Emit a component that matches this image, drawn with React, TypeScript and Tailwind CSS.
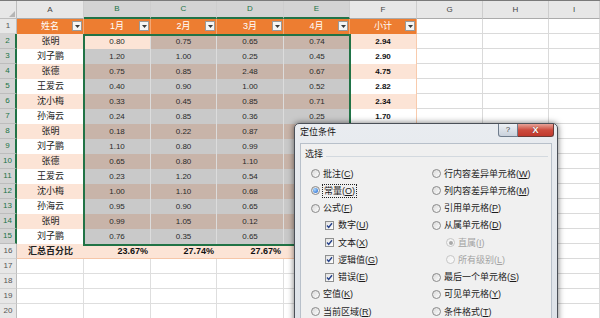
import React from 'react';

const FONT = "font-['Liberation_Sans','Noto_Sans_CJK_SC',sans-serif]";

// widths of columns A..I
const colW = ['w-[67px]', 'w-[67px]', 'w-[66px]', 'w-[67px]', 'w-[66px]', 'w-[67px]', 'w-[66px]', 'w-[66px]', 'flex-1'];
const letters = ['A', 'B', 'C', 'D', 'E', 'F', 'G', 'H', 'I'];

const names = ['张明', '刘子鹏', '张德', '王爱云', '沈小梅', '孙海云', '张明', '刘子鹏', '张德', '王爱云', '沈小梅', '孙海云', '张明', '刘子鹏'];
const values = [
  ['0.80', '0.75', '0.65', '0.74'],
  ['1.20', '1.00', '0.25', '0.45'],
  ['0.75', '0.85', '2.48', '0.67'],
  ['0.40', '0.90', '1.00', '0.52'],
  ['0.33', '0.45', '0.85', '0.71'],
  ['0.24', '0.85', '0.36', '0.25'],
  ['0.18', '0.22', '0.87', '0.56'],
  ['1.10', '0.80', '0.99', '0.43'],
  ['0.65', '0.80', '1.10', '0.92'],
  ['0.23', '1.20', '0.54', '0.38'],
  ['1.00', '1.10', '0.68', '0.77'],
  ['0.95', '0.90', '0.65', '0.48'],
  ['0.99', '1.05', '0.12', '0.66'],
  ['0.76', '0.35', '0.65', '0.80'],
];
const totals = values.map((r) => r.reduce((s, v) => s + parseFloat(v), 0).toFixed(2));
const months = ['1月', '2月', '3月', '4月'];
const percents = ['23.67%', '27.74%', '27.67%', '20.92%'];

// rows from 8 down are covered by the dialog in columns E and F
const hidden = (r: number) => r >= 8;

const GRID = 'bg-white border-r border-b border-[#dadada]';

const Cell = ({ w, cls, children }: { w: string; cls: string; children?: React.ReactNode }) => (
  <div className={`${w} shrink-0 h-full flex items-center ${cls}`}>{children}</div>
);

const Filter = () => (
  <span className="absolute right-[1px] top-[2px] w-[10px] h-[10px] bg-[#f4f4f4] border border-[#9a9a9a] flex items-center justify-center">
    <svg width="5" height="3" viewBox="0 0 5 3">
      <path d="M0 0h5L2.5 3z" fill="#3a3a3a" />
    </svg>
  </span>
);

const RowHead = ({ r }: { r: number }) => {
  const sel = r >= 2 && r <= 15;
  return (
    <div
      className={`w-[17px] shrink-0 h-full flex items-center justify-center text-[8px] border-b ${
        sel
          ? 'bg-[#d3d3d3] text-[#217346] border-r-2 border-r-[#217346] border-b-[#bdbdbd]'
          : 'bg-[#e7e7e7] text-[#555] border-r border-r-[#bdbdbd] border-b-[#d2d2d2]'
      }`}
    >
      {r}
    </div>
  );
};

const SheetRow = ({ r }: { r: number }) => {
  const cells: React.ReactNode[] = [];
  if (r === 1) {
    const heads = ['姓名', ...months, '小计'];
    heads.forEach((h, i) =>
      cells.push(
        <Cell key={i} w={colW[i]} cls="relative justify-center bg-[#ed7d31] text-white border-r border-[#f3a774]">
          {h}
          <Filter />
        </Cell>
      )
    );
  } else if (r <= 15) {
    const i = r - 2;
    const peach = r % 2 === 0;
    cells.push(
      <Cell key="a" w={colW[0]} cls={`justify-center text-[#222] ${peach ? 'bg-[#fce4d6]' : 'bg-white'}`}>
        {names[i]}
      </Cell>
    );
    values[i].forEach((v, j) => {
      const bg = r === 2 && j === 0 ? 'bg-[#fce4d6]' : peach ? 'bg-[#c8b4a9]' : 'bg-[#c9c9c9]';
      cells.push(
        <Cell key={j} w={colW[j + 1]} cls={`justify-center text-[8px] text-[#2a2a2a] ${bg} ${j < 3 ? 'border-r border-[#dcdcdc]' : ''}`}>
          {j === 3 && hidden(r) ? null : v}
        </Cell>
      );
    });
    cells.push(
      <Cell key="f" w={colW[5]} cls={`justify-center text-[8px] font-bold text-[#111] border-r border-[#f8cbad] ${peach ? 'bg-[#fce4d6]' : 'bg-white'}`}>
        {hidden(r) ? null : totals[i]}
      </Cell>
    );
  } else if (r === 16) {
    cells.push(
      <Cell key="a" w={colW[0]} cls="justify-center font-bold text-[#222] bg-[#fce4d6] border-b border-[#f6c6a8]">
        汇总百分比
      </Cell>
    );
    percents.forEach((p, j) =>
      cells.push(
        <Cell key={j} w={colW[j + 1]} cls="justify-end pr-[3px] text-[9px] font-bold text-[#111] bg-[#fce4d6] border-b border-[#f6c6a8]">
          {j === 3 ? null : p}
        </Cell>
      )
    );
    cells.push(<Cell key="f" w={colW[5]} cls="bg-[#fce4d6] border-b border-r border-[#f6c6a8]" />);
  } else {
    for (let j = 0; j < 6; j++) cells.push(<Cell key={j} w={colW[j]} cls="bg-white border-r border-b border-[#dedede]" />);
  }
  for (let j = 6; j < 9; j++) cells.push(<Cell key={`g${j}`} w={colW[j]} cls={GRID} />);

  return (
    <div className="flex h-[15px] text-[9px] leading-none">
      <RowHead r={r} />
      {cells}
    </div>
  );
};

const Radio = ({ on, disabled }: { on?: boolean; disabled?: boolean }) => (
  <span
    className={`w-[9px] h-[9px] rounded-full border shrink-0 flex items-center justify-center bg-gradient-to-br ${
      disabled ? 'border-[#c6c6c6] from-[#f0f0f0] to-[#fbfbfb]' : 'border-[#8a8a8a] from-[#d9d9d9] to-[#fdfdfd]'
    }`}
  >
    {on && (
      <span
        className={
          disabled
            ? 'w-[4px] h-[4px] rounded-full bg-[#a9a9a9]'
            : 'w-[5px] h-[5px] rounded-full bg-[radial-gradient(circle_at_35%_35%,#a8d8ff,#1d5ec8)]'
        }
      />
    )}
  </span>
);

const Check = () => (
  <span className="w-[9px] h-[9px] border border-[#8e8f8f] bg-gradient-to-br from-[#e2e2e2] to-white shrink-0 flex items-center justify-center">
    <svg width="7" height="7" viewBox="0 0 7 7">
      <path d="M1 3.6 2.7 5.4 6 1.2" fill="none" stroke="#24408a" strokeWidth="1.4" />
    </svg>
  </span>
);

type OptProps = {
  label: string;
  k: string;
  check?: boolean;
  sub?: boolean;
  on?: boolean;
  disabled?: boolean;
  focus?: boolean;
};

const Opt = ({ label, k, check, sub, on, disabled, focus }: OptProps) => (
  <div className={`h-[17.25px] flex items-center ${sub ? 'pl-[14px]' : ''}`}>
    {check ? <Check /> : <Radio on={on} disabled={disabled} />}
    <span
      className={`whitespace-nowrap leading-[12px] ${check ? 'ml-[4px]' : focus ? 'ml-[2px] px-[1px] border border-dotted border-[#222]' : 'ml-[3px]'} ${
        disabled ? 'text-[#a3a3a3]' : 'text-[#1c1c1c]'
      }`}
    >
      {label}(<span className="underline">{k}</span>)
    </span>
  </div>
);

const leftOpts: OptProps[] = [
  { label: '批注', k: 'C' },
  { label: '常量', k: 'O', on: true, focus: true },
  { label: '公式', k: 'F' },
  { label: '数字', k: 'U', check: true, sub: true },
  { label: '文本', k: 'X', check: true, sub: true },
  { label: '逻辑值', k: 'G', check: true, sub: true },
  { label: '错误', k: 'E', check: true, sub: true },
  { label: '空值', k: 'K' },
  { label: '当前区域', k: 'R' },
];

const rightOpts: OptProps[] = [
  { label: '行内容差异单元格', k: 'W' },
  { label: '列内容差异单元格', k: 'M' },
  { label: '引用单元格', k: 'P' },
  { label: '从属单元格', k: 'D' },
  { label: '直属', k: 'I', sub: true, on: true, disabled: true },
  { label: '所有级别', k: 'L', sub: true, disabled: true },
  { label: '最后一个单元格', k: 'S' },
  { label: '可见单元格', k: 'Y' },
  { label: '条件格式', k: 'T' },
];

const GotoDialog = () => (
  <div className="absolute left-[294px] top-[122px] w-[264px] h-[206px] rounded-t-[5px] border border-[#4b5058] bg-gradient-to-b from-[#e9ecf0] to-[#dde2e8] shadow-[0_0_6px_rgba(0,0,0,0.55)] flex flex-col">
    <div className="h-[19px] flex items-start justify-between pl-[5px] pr-[3px]">
      <span className="mt-[4px] text-[9px] leading-none text-[#111]">定位条件</span>
      <div className="flex">
        <div className="w-[20px] h-[13px] rounded-bl-[3px] border border-t-0 border-[#6f7c8c] bg-gradient-to-b from-[#eef1f5] to-[#c9d1dc] flex items-center justify-center text-[8px] text-[#444] leading-none">
          ?
        </div>
        <div className="w-[36px] h-[13px] rounded-br-[3px] border border-t-0 border-l-0 border-[#6b3a36] bg-gradient-to-b from-[#e6a298] via-[#cc4b3e] to-[#c0392d] flex items-center justify-center text-[9px] font-bold text-white leading-none [text-shadow:0_0_1px_#5a1a14]">
          X
        </div>
      </div>
    </div>
    <div className="flex-1 mx-[5px] bg-[#f0f0f0] border border-[#b8c0ca] text-[9px]">
      <div className="mt-[5px] h-[11px] flex items-center pl-[4px] pr-[3px]">
        <span className="leading-none text-[#1c1c1c]">选择</span>
        <div className="flex-1 h-px bg-[#d3d9df] ml-[3px] mt-[3px]" />
      </div>
      <div className="mt-[5px] flex pl-[10px]">
        <div className="w-[121px] shrink-0 flex flex-col">
          {leftOpts.map((o) => (
            <Opt key={o.k} {...o} />
          ))}
        </div>
        <div className="flex flex-col">
          {rightOpts.map((o) => (
            <Opt key={o.k} {...o} />
          ))}
        </div>
      </div>
    </div>
  </div>
);

const App: React.FC = () => {
  const rows = Array.from({ length: 20 }, (_, i) => i + 1);
  return (
    <div className={`relative w-[600px] h-[318px] overflow-hidden bg-white border-t border-[#7a7a7a] ${FONT}`}>
      {/* column headers */}
      <div className="flex h-[18px] text-[8px] leading-none">
        <div className="w-[17px] shrink-0 h-full bg-[#e7e7e7] border-r border-b border-[#bdbdbd] flex items-end justify-end p-[1px]">
          <svg width="6" height="6" viewBox="0 0 6 6">
            <path d="M6 0v6H0z" fill="#b5b5b5" />
          </svg>
        </div>
        {letters.map((l, i) => {
          const sel = i >= 1 && i <= 4;
          return (
            <div
              key={l}
              className={`${colW[i]} shrink-0 h-full flex items-center justify-center border-r border-r-[#cdcdcd] ${
                sel
                  ? 'bg-[#d3d3d3] text-[#217346] border-b-2 border-b-[#217346]'
                  : 'bg-[#e7e7e7] text-[#444] border-b border-b-[#ababab]'
              }`}
            >
              {l}
            </div>
          );
        })}
      </div>

      {rows.map((r) => (
        <SheetRow key={r} r={r} />
      ))}

      {/* selection outline B2:E15 */}
      <div className="absolute left-[83px] top-[33px] w-[268px] h-[212px] border-2 border-[#217346] pointer-events-none" />

      <GotoDialog />
    </div>
  );
};

export default App;
